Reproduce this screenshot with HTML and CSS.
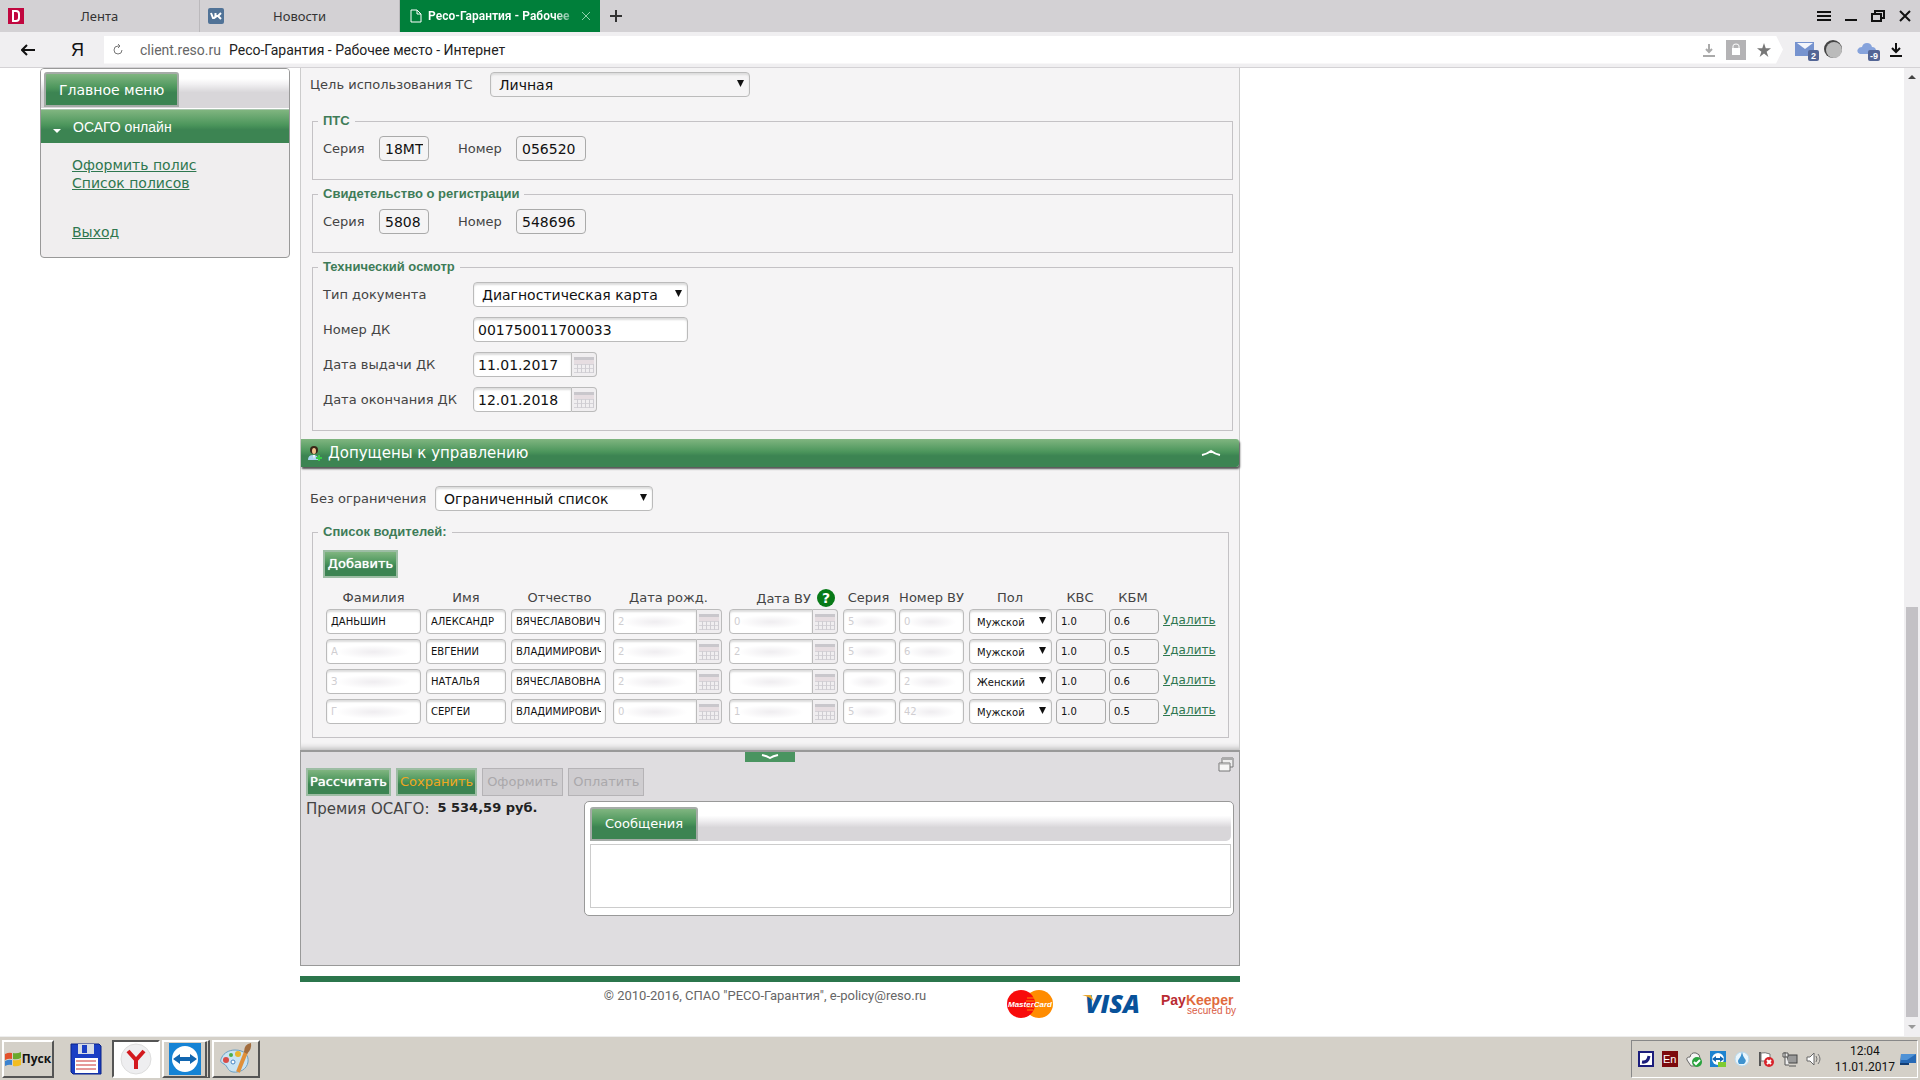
FILE: index.html
```html
<!DOCTYPE html>
<html lang="ru">
<head>
<meta charset="utf-8">
<title>Ресо-Гарантия - Рабочее место - Интернет</title>
<link rel="stylesheet" href="styles.css">
</head>
<body>
<header class="browser">
  <div class="tabs">
    <a class="tab" href="#"><svg width="16" height="16" viewBox="0 0 16 16"><rect width="16" height="16" fill="#c1073f"/><path d="M5 3h3q3 0 3 3v4q0 3-3 3H5z" fill="none" stroke="#fff" stroke-width="2"/></svg><span>Лента</span></a>
    <a class="tab" href="#"><svg width="16" height="16" viewBox="0 0 16 16"><rect width="16" height="16" rx="2" fill="#517397"/><path d="M3 5l2 5h1q1.500 0 1.500-5v5M13 5l-3 3 3 3M8 8h2" fill="none" stroke="#fff" stroke-width="2"/></svg><span>Новости</span></a>
    <a class="tab active" href="#"><svg width="12" height="14" viewBox="0 0 12 14"><path d="M1 1h6l4 4v8H1zM7 1v4h4" fill="none" stroke="#fff"/></svg><span>Ресо-Гарантия - Рабочее</span><svg width="10" height="10" viewBox="0 0 10 10"><path d="M1 1l8 8M9 1L1 9" stroke="#8ecfaa" stroke-width="1"/></svg></a>
    <button class="plain newtab" aria-label="Новая вкладка"><svg width="14" height="14" viewBox="0 0 14 14"><path d="M7 1v12M1 7h12" stroke="#333" stroke-width="2"/></svg></button>
    <div class="window-buttons">
      <svg width="14" height="14" viewBox="0 0 14 14"><path d="M0 3h14M0 7h14M0 11h14" stroke="#111" stroke-width="2"/></svg>
      <svg width="14" height="14" viewBox="0 0 14 14"><path d="M1 11h12" stroke="#111" stroke-width="2"/></svg>
      <svg width="14" height="14" viewBox="0 0 14 14"><path d="M1 5h9v7H1zM4 5V2h9v7h-3" fill="none" stroke="#111" stroke-width="2"/></svg>
      <svg width="14" height="14" viewBox="0 0 14 14"><path d="M2 2l10 10M12 2L2 12" stroke="#111" stroke-width="2"/></svg>
    </div>
  </div>
  <div class="toolbar">
    <svg class="back" width="14" height="12" viewBox="0 0 14 12"><path d="M14 6H2M6 1L1 6l5 5" fill="none" stroke="#111" stroke-width="2"/></svg>
    <span class="ya">Я</span>
    <div class="address">
      <svg width="12" height="12" viewBox="0 0 12 12"><path d="M10 6a4 4 0 1 1-4-4h2M6 0l2 2-2 2" fill="none" stroke="#777"/></svg>
      <span class="host">client.reso.ru</span><span>Ресо-Гарантия - Рабочее место - Интернет</span>
      <div class="address-icons">
        <svg width="12" height="14" viewBox="0 0 12 14"><path d="M6 1v8M3 6l3 3 3-3M0 13h12" fill="none" stroke="#aaa" stroke-width="2"/></svg>
        <svg width="20" height="20" viewBox="0 0 20 20"><rect width="20" height="20" fill="#b4b3b5"/><rect x="6" y="8" width="8" height="7" fill="#fff"/><path d="M7 8V6q0-2 3-2t3 2v2" fill="none" stroke="#fff"/></svg>
        <svg width="14" height="14" viewBox="0 0 16 16"><path d="M8 0l2 6h6l-5 4 2 6-5-4-5 4 2-6-5-4h6z" fill="#777"/></svg>
      </div>
    </div>
    <div class="extensions">
      <svg width="24" height="22" viewBox="0 0 24 22"><path d="M0 3h19v14H0z" fill="#7693cf"/><path d="M2 4l8 6 8-6z" fill="#f4f6fb"/><rect x="13" y="11" width="11" height="11" rx="2" fill="#536595"/><text x="16" y="20" class="badge">2</text></svg>
      <svg class="disc" width="20" height="20" viewBox="0 0 20 20"><circle cx="9" cy="9" r="9" fill="#444"/><circle cx="10" cy="10" r="8" fill="#bbb"/></svg>
      <svg width="24" height="22" viewBox="0 0 24 22"><path d="M3 15q-4-2-2-5 1-2 4-2 1-4 5-4t5 4q4 0 4 4t-3 3z" fill="#86a3dc"/><rect x="11" y="11" width="12" height="11" rx="2" fill="#536595"/><text x="13" y="20" class="badge">-9</text></svg>
      <svg width="12" height="16" viewBox="0 0 12 16"><path d="M6 1v9M2 6l4 4 4-4M0 14h12" fill="none" stroke="#111" stroke-width="2"/></svg>
    </div>
  </div>
</header>

<div class="viewport">
  <div class="site">
    <nav class="menu">
      <div class="tab-strip"><span class="green menu-tab">Главное меню</span></div>
      <div class="menu-group"><i class="caret"></i>ОСАГО онлайн</div>
      <div class="menu-links"><a href="#">Оформить полис</a><a href="#">Список полисов</a><a class="exit" href="#">Выход</a></div>
    </nav>
    <main class="content">
      <div class="form">
        <div class="row purpose"><label for="purpose">Цель использования ТС</label><span class="select w-purpose soft"><select id="purpose"><option>Личная</option></select></span></div>
        <fieldset class="doc">
          <legend>ПТС</legend>
          <div class="row pair"><label for="s1">Серия</label><input class="ro w50" id="s1" value="18МТ"><label for="n1">Номер</label><input class="ro w70" id="n1" value="056520"></div>
        </fieldset>
        <fieldset class="doc">
          <legend>Свидетельство о регистрации</legend>
          <div class="row pair"><label for="s2">Серия</label><input class="ro w50" id="s2" value="5808"><label for="n2">Номер</label><input class="ro w70" id="n2" value="548696"></div>
        </fieldset>
        <fieldset class="doc tech">
          <legend>Технический осмотр</legend>
          <div class="row"><label for="t1">Тип документа</label><span class="select w-type"><select id="t1"><option>Диагностическая карта</option></select></span></div>
          <div class="row"><label for="t2">Номер ДК</label><input class="w-type" id="t2" value="001750011700033"></div>
          <div class="row"><label for="t3">Дата выдачи ДК</label><span class="date wide"><input id="t3" value="11.01.2017"><button class="cal" aria-label="Календарь"></button></span></div>
          <div class="row"><label for="t4">Дата окончания ДК</label><span class="date wide"><input id="t4" value="12.01.2018"><button class="cal" aria-label="Календарь"></button></span></div>
        </fieldset>
        <h2 class="section">
          <svg width="14" height="16" viewBox="0 0 14 16"><path d="M0 15q0-5 5-5t6 5z" fill="#a9d3ef"/><path d="M5 10l1 4 1-4z" fill="#fff"/><circle cx="6" cy="5" r="4" fill="#3b2718"/><ellipse cx="6" cy="6" rx="2" ry="3" fill="#f1c08c"/><path d="M11 10v6M8 13h6" stroke="#38c94b" stroke-width="2"/></svg>
          <span>Допущены к управлению</span>
          <svg class="collapse" width="20" height="8" viewBox="0 0 20 8"><path d="M1 6q5-1 9-4 4 3 9 4" fill="none" stroke="#fff" stroke-width="2"/></svg>
        </h2>
        <div class="row limit"><label for="limit">Без ограничения</label><span class="select w-limit"><select id="limit"><option>Ограниченный список</option></select></span></div>
        <fieldset class="drivers">
          <legend>Список водителей:</legend>
          <button class="green btn">Добавить</button>
          <table>
            <colgroup><col class="c1"><col class="c2"><col class="c3"><col class="c4"><col class="c5"><col class="c6"><col class="c7"><col class="c8"><col class="c9"><col class="c9"><col></colgroup>
            <thead><tr><th>Фамилия</th><th>Имя</th><th>Отчество</th><th>Дата рожд.</th><th class="help-cell">Дата ВУ <button class="help" aria-label="Справка">?</button></th><th>Серия</th><th>Номер ВУ</th><th>Пол</th><th>КВС</th><th>КБМ</th><th></th></tr></thead>
            <tbody>
              <tr><td><input aria-label="Фамилия" value="ДАНЬШИН"></td><td><input aria-label="Имя" value="АЛЕКСАНДР"></td><td><input aria-label="Отчество" value="ВЯЧЕСЛАВОВИЧ"></td><td><span class="date"><input class="hid" aria-label="Дата рождения" value="2"><button class="cal" aria-label="Календарь"></button></span></td><td><span class="date"><input class="hid" aria-label="Дата ВУ" value="0"><button class="cal" aria-label="Календарь"></button></span></td><td><input class="hid" aria-label="Серия" value="5"></td><td><input class="hid" aria-label="Номер ВУ" value="0"></td><td><span class="select"><select aria-label="Пол"><option>Мужской</option></select></span></td><td><input class="ro" aria-label="КВС" value="1.0"></td><td><input class="ro" aria-label="КБМ" value="0.6"></td><td><a href="#">Удалить</a></td></tr>
              <tr><td><input class="hid" aria-label="Фамилия" value="А"></td><td><input aria-label="Имя" value="ЕВГЕНИЙ"></td><td><input aria-label="Отчество" value="ВЛАДИМИРОВИЧ"></td><td><span class="date"><input class="hid" aria-label="Дата рождения" value="2"><button class="cal" aria-label="Календарь"></button></span></td><td><span class="date"><input class="hid" aria-label="Дата ВУ" value="2"><button class="cal" aria-label="Календарь"></button></span></td><td><input class="hid" aria-label="Серия" value="5"></td><td><input class="hid" aria-label="Номер ВУ" value="6"></td><td><span class="select"><select aria-label="Пол"><option>Мужской</option></select></span></td><td><input class="ro" aria-label="КВС" value="1.0"></td><td><input class="ro" aria-label="КБМ" value="0.5"></td><td><a href="#">Удалить</a></td></tr>
              <tr><td><input class="hid" aria-label="Фамилия" value="З"></td><td><input aria-label="Имя" value="НАТАЛЬЯ"></td><td><input aria-label="Отчество" value="ВЯЧЕСЛАВОВНА"></td><td><span class="date"><input class="hid" aria-label="Дата рождения" value="2"><button class="cal" aria-label="Календарь"></button></span></td><td><span class="date"><input class="hid" aria-label="Дата ВУ" value=""><button class="cal" aria-label="Календарь"></button></span></td><td><input class="hid" aria-label="Серия" value=""></td><td><input class="hid" aria-label="Номер ВУ" value="2"></td><td><span class="select"><select aria-label="Пол"><option>Женский</option></select></span></td><td><input class="ro" aria-label="КВС" value="1.0"></td><td><input class="ro" aria-label="КБМ" value="0.6"></td><td><a href="#">Удалить</a></td></tr>
              <tr><td><input class="hid" aria-label="Фамилия" value="Г"></td><td><input aria-label="Имя" value="СЕРГЕЙ"></td><td><input aria-label="Отчество" value="ВЛАДИМИРОВИЧ"></td><td><span class="date"><input class="hid" aria-label="Дата рождения" value="0"><button class="cal" aria-label="Календарь"></button></span></td><td><span class="date"><input class="hid" aria-label="Дата ВУ" value="1"><button class="cal" aria-label="Календарь"></button></span></td><td><input class="hid" aria-label="Серия" value="5"></td><td><input class="hid" aria-label="Номер ВУ" value="42"></td><td><span class="select"><select aria-label="Пол"><option>Мужской</option></select></span></td><td><input class="ro" aria-label="КВС" value="1.0"></td><td><input class="ro" aria-label="КБМ" value="0.5"></td><td><a href="#">Удалить</a></td></tr>
            </tbody>
          </table>
        </fieldset>
      </div>
      <section class="summary">
        <button class="handle" aria-label="Свернуть"><svg width="18" height="6" viewBox="0 0 18 6"><path d="M1 1q5 1 8 3 3-2 8-3" fill="none" stroke="#fff" stroke-width="2"/></svg></button>
        <div class="actions">
          <button class="green btn">Рассчитать</button><button class="green btn save">Сохранить</button><button class="btn off" disabled>Оформить</button><button class="btn off" disabled>Оплатить</button>
          <svg class="popout" width="16" height="16" viewBox="0 0 16 16"><path d="M4 1h11v9H4z" fill="#eee" stroke="#777"/><path d="M4 2h11" stroke="#aaa" stroke-width="2"/><path d="M1 6h11v8H1z" fill="#f6f6f6" stroke="#777"/><path d="M1 7h11" stroke="#aaa"/></svg>
        </div>
        <div class="result">
          <div class="premium"><span>Премия ОСАГО:</span><b>5 534,59 руб.</b></div>
          <div class="messages"><div class="tab-strip"><span class="green msg-tab">Сообщения</span></div><div class="msg-body"></div></div>
        </div>
      </section>
      <footer class="footer">
        <span class="copy">© 2010-2016, СПАО "РЕСО-Гарантия", e-policy@reso.ru</span>
        <div class="logos">
          <svg width="48" height="30" viewBox="0 0 48 30"><circle cx="33" cy="15" r="14" fill="#ff8c00"/><circle cx="15" cy="15" r="14" fill="#f80b0b"/><path d="M21 9h7M20 12h8M20 18h8M21 21h6" stroke="#ff8c00"/><text x="24" y="18" text-anchor="middle" class="mc">MasterCard</text></svg>
          <svg width="70" height="32" viewBox="0 0 70 32"><text x="7" y="25" class="visa">VISA</text><path d="M4 7h9l3 7q-3-5-12-7z" fill="#e9a72c"/></svg>
          <svg width="76" height="26" viewBox="0 0 76 26"><text x="0" y="14" class="pk"><tspan fill="#b92b32">Pay</tspan><tspan fill="#e06a3c">Keeper</tspan></text><text x="75" y="23" text-anchor="end" class="sb">secured by</text></svg>
        </div>
      </footer>
    </main>
  </div>
  <div class="scrollbar"><i class="up"></i><i class="thumb"></i><i class="down"></i></div>
</div>

<footer class="taskbar">
  <button class="task start"><svg width="16" height="16" viewBox="0 0 16 16"><path d="M0 3q4-2 7-1v6q-3-1-7 1z" fill="#e2512b"/><path d="M8 2q4 1 8-1v6q-4 2-8 1z" fill="#69a92d"/><path d="M0 10q4-2 7-1v5q-3-1-7 1z" fill="#3c83cf"/><path d="M8 9q4 1 8-1v6q-4 2-8 1z" fill="#f2bd22"/></svg>Пуск</button>
  <svg class="floppy" width="32" height="32" viewBox="0 0 32 32"><path d="M1 1h28l2 2v28H3l-2-2z" fill="#1b3fc4" stroke="#0b2286"/><path d="M8 1h16v10H8z" fill="#d7dce4"/><path d="M12 2h5v8h-5z" fill="#1b3fc4"/><path d="M5 15h23v15H5z" fill="#fff"/><path d="M6 18h20M6 22h20M6 26h20" stroke="#c33"/></svg>
  <button class="task pressed" aria-label="Браузер"><svg width="32" height="32" viewBox="0 0 32 32"><circle cx="16" cy="16" r="15" fill="#eeeef0" stroke="#ddd"/><path d="M8 8l8 9v9M24 8l-8 9" fill="none" stroke="#d3191e" stroke-width="4"/></svg></button>
  <button class="task double" aria-label="Удалённый доступ"><svg width="32" height="32" viewBox="0 0 32 32"><rect width="32" height="32" fill="#1583d5"/><circle cx="16" cy="16" r="13" fill="#fff"/><path d="M4 16l7-5v3h10v-3l7 5-7 5v-3H11v3z" fill="#1266b0"/></svg></button>
  <button class="task" aria-label="Рисование"><svg width="34" height="34" viewBox="0 0 34 34"><path d="M16 8c9 0 14 5 13 12s-8 11-15 10c-6-1-5-6-9-8S1 19 3 15s7-7 13-7z" fill="#c9e3f3" stroke="#6ba0c4"/><circle cx="7" cy="18" r="3" fill="#d84c48"/><circle cx="12" cy="13" r="2" fill="#4fae48"/><circle cx="19" cy="12" r="3" fill="#e9b52c"/><circle cx="14" cy="20" r="2" fill="#fff" stroke="#4585c5"/><path d="M19 30l8-20" stroke="#e0903a" stroke-width="4"/><path d="M25 10q0-8 7-9 1 6-4 11z" fill="#a26c3d"/></svg></button>
  <div class="tray">
    <svg width="16" height="16" viewBox="0 0 16 16"><rect x="1" y="1" width="14" height="14" fill="#fff" stroke="#1b1d7c" stroke-width="2"/><path d="M4 11q6 1 7-6" fill="none" stroke="#1b1d7c" stroke-width="3"/></svg>
    <svg width="16" height="16" viewBox="0 0 16 16"><rect width="16" height="16" fill="#7c0a0d"/><text x="1" y="12" class="lang">En</text></svg>
    <svg width="16" height="16" viewBox="0 0 16 16"><path d="M1 9q-1-3 3-3 1-5 6-4 4 1 4 5l1 4-4 4H5z" fill="#f5f5f5" stroke="#666"/><circle cx="11" cy="11" r="5" fill="#29a33d"/><path d="M8 11l2 2 4-4" fill="none" stroke="#fff" stroke-width="2"/></svg>
    <svg width="16" height="16" viewBox="0 0 16 16"><rect width="16" height="16" fill="#1d83d0"/><circle cx="8" cy="8" r="6" fill="#fff"/><path d="M2 8l4-3v2h4V5l4 3-4 3V9H6v2z" fill="#1266b0"/><path d="M8 11h8v5H8z" fill="#7ecb32"/></svg>
    <svg width="16" height="16" viewBox="0 0 16 16"><circle cx="8" cy="8" r="7" fill="#e9f5fc" stroke="#b8d9ec"/><path d="M8 1q-1 5-3 7t0 5h5q3-3 1-5T8 1z" fill="#3f93cf"/></svg>
    <svg width="16" height="16" viewBox="0 0 16 16"><path d="M2 1v14" stroke="#555" stroke-width="2"/><path d="M3 2q4-1 9 1v7H3z" fill="#fff" stroke="#777"/><circle cx="11" cy="11" r="5" fill="#d8232a"/><path d="M9 9l4 4M13 9l-4 4" stroke="#fff" stroke-width="2"/></svg>
    <svg width="16" height="16" viewBox="0 0 16 16"><rect x="5" y="4" width="10" height="8" fill="#999" stroke="#444"/><path d="M7 15h7M3 1v13h4M1 2h5v4H1z" fill="#eee" stroke="#555"/></svg>
    <svg width="16" height="16" viewBox="0 0 16 16"><path d="M1 6h3l4-4v12l-4-4H1z" fill="#fff" stroke="#666"/><path d="M10 5q2 3 0 6M12 3q4 5 0 10" fill="none" stroke="#777"/></svg>
    <div class="clock">12:04<br>11.01.2017</div>
    <svg width="16" height="16" viewBox="0 0 16 16"><path d="M1 3h15v9H0z" fill="#2769b5"/><path d="M1 3h15l-9 6H1z" fill="#4f92d6"/><path d="M0 13h9" stroke="#123e75" stroke-width="2"/></svg>
  </div>
</footer>
</body>
</html>
```
FILE: styles.css
```css
* { box-sizing: border-box; }
body {
  margin: 0;
  height: 100vh;
  display: flex;
  flex-direction: column;
  overflow: hidden;
  background: #fff;
  color: #444;
  font: 13px/16px "DejaVu Sans", sans-serif;
}
input, select, button { font-family: inherit; margin: 0; }
svg { flex: none; display: block; }
a { color: #2f7750; }

/* browser chrome */
.browser { flex: none; font-family: "Noto Sans", sans-serif; }
.tabs { display: flex; align-items: center; height: 32px; background: #d3d1d4; }
.tab {
  display: flex;
  align-items: center;
  width: 200px;
  height: 32px;
  padding: 0 8px;
  border-right: 1px solid #bbb9bc;
  color: #333;
  text-decoration: none;
}
.tab span { flex: 1; padding-right: 16px; text-align: center; white-space: nowrap; overflow: hidden; }
.tab.active { gap: 6px; padding: 0 9px 0 10px; background: #007f3a; border: 0; color: #fff; font: bold 12px/16px Roboto, sans-serif; }
.tab.active span {
  padding: 0;
  text-align: left;
  color: transparent;
  background: linear-gradient(90deg, #fff 85%, #4da576);
  background-clip: text;
}
.plain { border: 0; padding: 0; background: none; }
.newtab { margin-left: 9px; }
.window-buttons { display: flex; gap: 13px; margin-left: auto; padding-right: 8px; }
.toolbar { display: flex; align-items: center; height: 36px; background: #f0eff1; border-bottom: 1px solid #d4d2d5; }
.back { margin-left: 21px; }
.ya { width: 69px; padding-left: 36px; color: #111; font: 18px/24px "Liberation Sans Narrow", "Liberation Sans", sans-serif; }
.address {
  flex: 1;
  display: flex;
  align-items: center;
  height: 28px;
  padding: 0 12px 0 8px;
  background: #fff;
  color: #222;
  font: 14px/16px Roboto, sans-serif;
  clip-path: polygon(0 0, calc(100% - 7px) 0, 100% 50%, calc(100% - 7px) 100%, 0 100%);
}
.host { margin: 0 8px 0 16px; color: #666; }
.address-icons { display: flex; align-items: center; gap: 11px; margin-left: auto; }
.extensions { display: flex; align-items: center; gap: 9px; padding: 0 18px 0 12px; }
.disc { margin: 0 4px 0 -4px; }
.badge { font: bold 9px "Liberation Sans", sans-serif; fill: #fff; }

/* page area */
.viewport { flex: 1; min-height: 0; display: flex; justify-content: space-between; overflow: hidden; }
.site {
  flex: 1;
  display: grid;
  grid-template-columns: 250px 1fr;
  align-items: start;
  gap: 10px;
  max-width: 1240px;
  padding-left: 40px;
}
.green { background: linear-gradient(#80b580, #4c965c 45%, #3c8452 60%, #3c8452); color: #fff; }
.menu { border: 1px solid #999; border-radius: 4px; background: #f0eeef; overflow: hidden; }
.tab-strip { display: flex; background: linear-gradient(#fff 25%, #f0eff1 40%, #d8d6d9 60%, #d8d6d9); }
.menu-tab, .msg-tab { border: 2px solid #a5aba7; border-radius: 3px 3px 0 0; }
.menu .tab-strip { height: 40px; padding: 3px 0 1px 3px; border-bottom: 1px solid #fff; }
.menu-tab { padding: 8px 13px 9px; font-size: 14px; line-height: 16px; }
.menu-group {
  display: flex;
  align-items: center;
  height: 34px;
  padding-left: 12px;
  background: linear-gradient(#80b580, #4c965c 45%, #3c8452 60%, #3c8452);
  border-top: 1px solid #a9c6ae;
  color: #fff;
  font: 14px/16px "Liberation Sans", sans-serif;
}
.caret { margin: 8px 12px 0 0; border: 4px solid transparent; border-top-color: #fff; border-bottom: 0; }
.menu-links { display: flex; flex-direction: column; align-items: flex-start; padding: 13px 0 16px 31px; font-size: 14px; line-height: 18px; }
.exit { margin-top: 31px; }

/* form */
.content { min-width: 0; }
.form { padding: 4px 6px 12px 9px; background: #f5f4f5; border: 1px solid #ccc; border-width: 0 1px; box-shadow: inset 0 -8px 6px -7px #aaa; }
.row { display: flex; align-items: center; height: 25px; }
.row input, .row select { font-size: 14px; }
input, .select, select { height: 25px; }
input {
  width: 100%;
  padding: 0 4px;
  border: 1px solid #bbb;
  border-radius: 4px;
  background: #fff;
  box-shadow: inset 0 2px 2px #ddd;
  color: #111;
}
input.ro { background: #f5f4f5; border-color: #aaa; box-shadow: none; }
.row .w50 { width: 50px; }
.row .w70 { width: 70px; }
.w-purpose { width: 260px; }
.row .w-type { width: 215px; }
.w-limit { width: 218px; }
.select { position: relative; display: block; }
.select::after {
  content: "";
  position: absolute;
  top: 8px;
  right: 6px;
  width: 7px;
  height: 7px;
  background: #111;
  clip-path: polygon(0 0, 100% 0, 50% 100%);
  pointer-events: none;
}
select {
  appearance: none;
  width: 100%;
  padding: 1px 8px 0;
  border: 1px solid #bbb;
  border-radius: 4px;
  background: #fff;
  box-shadow: inset 0 2px 2px #ddd;
  color: #111;
}
.soft select { background: #f5f4f5; }
.purpose label { width: 180px; }
.limit label { width: 125px; }
.purpose { margin-bottom: 16px; }
fieldset { min-width: 0; margin: 0 0 6px 2px; border: 1px solid #c4c2c5; padding: 0 10px; }
legend { padding: 0 5px; margin-left: -5px; color: #3e7c58; font: bold 13px/16px "Liberation Sans", sans-serif; }
.doc { height: 67px; }
.pair { margin-top: 7px; }
.pair label:nth-of-type(1) { width: 56px; }
.pair label:nth-of-type(2) { width: 58px; margin-left: 29px; }
.pair input { padding: 0 5px; }
.tech { height: 172px; margin-bottom: 8px; }
.tech .row { margin: 7px 0 10px; }
.tech .row + .row { margin-top: 0; }
.tech label { width: 150px; }
.date { display: flex; }
.date input { border-radius: 4px 0 0 4px; width: 84px; }
.wide input { width: 99px; }
.cal {
  flex: none;
  width: 25px;
  height: 25px;
  padding: 4px 2px 3px;
  border: 1px solid #bbb;
  border-left: 0;
  border-radius: 0 4px 4px 0;
  background:
    linear-gradient(#c9c7cc 0 3px, #e6dde1 3px 7px, transparent 7px) content-box,
    repeating-linear-gradient(90deg, transparent 0 3px, #cfcdd2 3px 4px) content-box,
    repeating-linear-gradient(transparent 0 3px, #d5d3d8 3px 4px) content-box,
    #f0eef0;
}
.section {
  display: flex;
  align-items: center;
  height: 28px;
  margin: 0 -6px 19px -9px;
  padding: 0 18px 0 7px;
  border-radius: 0 3px 3px 0;
  background: linear-gradient(#80b580, #4c965c 45%, #3c8452 60%, #3c8452);
  box-shadow: 1px 2px 2px #555;
  color: #fff;
  font: 15px/18px "DejaVu Sans", sans-serif;
}
.section span { margin-left: 6px; }
.collapse { margin-left: auto; }
.limit { margin-bottom: 15px; }
.drivers { height: 212px; margin: 0 4px 0 2px; }
.drivers legend { line-height: 12px; }
.btn {
  height: 28px;
  padding: 0 2px;
  border: 2px solid #9dbda4;
  font-size: 13px;
  line-height: 16px;
  text-shadow: 0 0 1px #fff;
  white-space: nowrap;
}
.drivers .btn { display: block; width: 75px; margin-top: 12px; padding: 0; }
table { width: 100%; margin-top: 8px; margin-left: 3px; table-layout: fixed; border-collapse: collapse; }
th { height: 23px; padding: 0 5px 0 0; font-weight: normal; white-space: nowrap; }
td { height: 30px; padding: 0 5px 5px 0; vertical-align: top; }
td input { display: block; font-size: 10px; }
td select { font-size: 10px; padding-left: 7px; }
td:nth-child(3), td:nth-child(4) { padding-right: 7px; }
td:nth-child(6), td:nth-child(9), td:nth-child(10) { padding-right: 3px; }
td:nth-child(8) { padding-right: 4px; }
td a { margin-left: 1px; font-size: 12px; line-height: 23px; }
.c1 { width: 100px; }
.c2 { width: 85px; }
.c3 { width: 102px; }
.c4 { width: 116px; }
.c5 { width: 114px; }
.c6 { width: 56px; }
.c7 { width: 70px; }
.c8 { width: 87px; }
.c9 { width: 53px; }
.hid { color: #d0ced1; background: radial-gradient(closest-side, #efedf0, #fff) 50% 50% / 80% 60% no-repeat #fff; }
th.help-cell { padding-right: 8px; text-align: right; }
.help { width: 18px; height: 18px; margin-left: 2px; padding: 0; border: 0; border-radius: 50%; background: #087a18; color: #fff; font-weight: bold; font-size: 14px; line-height: 18px; }

/* summary */
.summary { height: 216px; padding: 0 5px; background: #dfdde0; border: 1px solid #999; border-top-width: 2px; }
.handle { display: flex; justify-content: center; align-items: center; width: 50px; height: 10px; margin: 0 auto; padding: 0; border: 0; background: #4a9460; }
.actions { display: flex; gap: 5px; height: 35px; margin-top: 4px; }
.actions .btn { margin-top: 2px; }
.save { color: #efa820; text-shadow: none; }
.off { padding: 0 4px; background: #cfcdd0; border: 1px solid #b5b3b6; color: #aaa8ab; text-shadow: none; }
.popout { margin-left: auto; margin-top: -9px; }
.result { display: flex; justify-content: space-between; }
.premium { display: flex; gap: 8px; font-size: 15px; line-height: 16px; }
.premium b { color: #222; font-size: 13px; line-height: 14px; }
.messages { width: 650px; height: 115px; padding: 5px 2px 5px 5px; border: 1px solid #999; border-radius: 5px; background: #fff; }
.messages .tab-strip { height: 34px; border-radius: 0 0 5px 0; }
.msg-tab { padding: 7px 13px; }
.msg-body { height: 64px; margin-top: 3px; border: 1px solid #ccc; }

/* site footer */
.footer { position: relative; display: flex; justify-content: center; margin-top: 10px; padding-top: 5px; border-top: 6px solid #2b764c; }
.copy { margin-right: 10px; color: #666; font: 13px/18px Roboto, sans-serif; }
.logos { position: absolute; top: 6px; right: 3px; display: flex; align-items: center; gap: 24px; }
.logos svg:last-child { margin-left: -11px; }
.mc { font: italic bold 8px "Liberation Sans", sans-serif; fill: #fff; }
.visa { font: italic 800 25px "Open Sans", sans-serif; fill: #08529a; }
.pk { font: bold 14px "Liberation Sans", sans-serif; }
.sb { font: 10px "Liberation Sans", sans-serif; fill: #d95b45; }

/* scrollbar */
.scrollbar { flex: none; display: flex; flex-direction: column; align-items: center; width: 16px; padding: 7px 0; background: #f0eff1; }
.up { border: 4px solid transparent; border-top: 0; border-bottom-color: #444; }
.down { border: 4px solid transparent; border-bottom: 0; border-top-color: #999; }
.thumb { width: 12px; height: 43%; margin: auto 0 8px; background: #c3c1c5; }

/* taskbar */
.taskbar { flex: none; display: flex; align-items: center; height: 44px; padding: 0 2px; background: #d4d0c8; border-top: 1px solid #eee; }
.task { display: flex; align-items: center; justify-content: center; width: 48px; height: 38px; margin-right: 2px; padding: 0; border: 2px solid; border-color: #fff #555 #555 #fff; background: #d4d0c8; }
.start { width: 52px; gap: 1px; color: #111; font: bold 12px/16px "Open Sans", sans-serif; }
.floppy { margin: 0 10px 0 14px; }
.pressed { background: #fff; border-color: #555 #fff #fff #555; }
.double { border-right: 5px double #555; }
.tray { display: flex; align-items: center; gap: 8px; height: 38px; margin-left: auto; padding: 0 1px 0 6px; border: 1px solid; border-color: #888 #fff #fff #888; }
.clock { margin: 0 -3px 0 5px; color: #111; font: 12px/16px Roboto, sans-serif; text-align: center; }
.lang { font: 11px "Liberation Sans", sans-serif; fill: #fff; }
```
